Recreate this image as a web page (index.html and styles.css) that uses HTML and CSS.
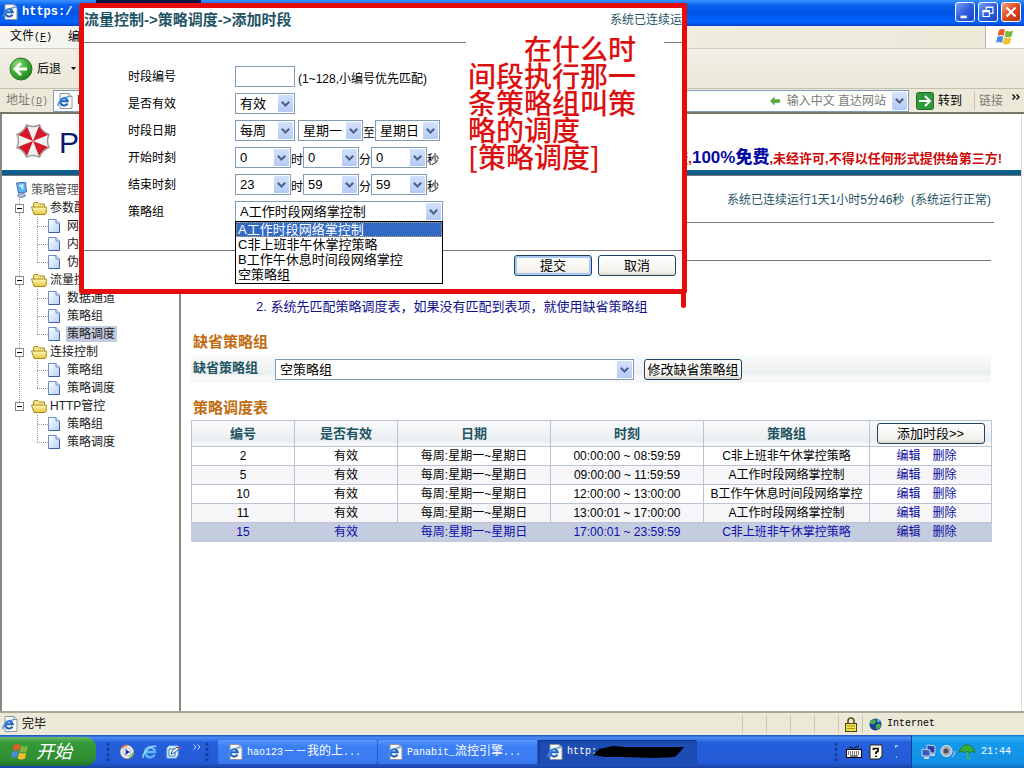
FILE: index.html
```html
<!DOCTYPE html>
<html lang="zh-CN">
<head>
<meta charset="utf-8">
<title>Panabit</title>
<link rel="stylesheet" href="styles.css">
</head>
<body>
<svg class="defs" aria-hidden="true">
  <defs>
    <linearGradient id="gFolder" x1="0" y1="0" x2="0" y2="1"><stop offset="0" stop-color="#fffbc0"/><stop offset="1" stop-color="#e8c33c"/></linearGradient>
    <linearGradient id="gFile" x1="0" y1="0" x2="1" y2="1"><stop offset="0" stop-color="#ffffff"/><stop offset="1" stop-color="#b4d0f6"/></linearGradient>
    <radialGradient id="gBack" cx=".35" cy=".3" r=".8"><stop offset="0" stop-color="#8fe07a"/><stop offset=".6" stop-color="#35a62c"/><stop offset="1" stop-color="#1b7a18"/></radialGradient>
    <symbol id="ie" viewBox="0 0 16 16">
      <path d="M3 .5h9l3 3v12H3z" fill="#fbfbf4" stroke="#8d96a8"/>
      <path d="M12 .5v3h3" fill="#d5dcea" stroke="#8d96a8"/>
      <path d="M10.4 10.5a3.7 3.7 0 1 1 .3-2.3H4" fill="none" stroke="#1c62c4" stroke-width="2"/>
      <path d="M1 13C0 10 7 3 12 4" fill="none" stroke="#3b8fe0" stroke-width="1.3"/>
    </symbol>
    <symbol id="flag" viewBox="0 0 20 20">
      <path d="M4 3c2-1.500 4-1.500 6 0L8.600 9c-2-1.500-4-1.500-6 0z" fill="#e8582c"/>
      <path d="M11 3.500c2 1.300 4 1.300 7 0L16.500 9.500c-2.500 1.300-5 1.300-7 0z" fill="#7db83a"/>
      <path d="M2.300 10c2-1.500 4-1.500 6 0L7 16c-2-1.500-4-1.500-6 0z" fill="#4a8ae0"/>
      <path d="M9.200 10.500c2.500 1.300 4.500 1.300 7 0L15 16.500c-2.500 1.300-5 1.300-7.300 0z" fill="#f4c02c"/>
    </symbol>
    <symbol id="folder" viewBox="0 0 16 13">
      <path d="M2.500 11V2l1-1.500h3.500L8.500 2h5v3" fill="#f7e58a" stroke="#a88a1c"/>
      <path d="M.5 5h12l2.800 0v6l-1.300 1.500H3z" fill="url(#gFolder)" stroke="#a88a1c"/>
    </symbol>
    <symbol id="file" viewBox="0 0 12 14">
      <path d="M.5 .5h7.500l3.500 3.500v9.500H.5z" fill="url(#gFile)" stroke="#6f8fc4"/>
      <path d="M8 .5V4h3.500" fill="#dce9fb" stroke="#6f8fc4"/>
      <path d="M1 13.500h10.500V5" fill="none" stroke="#41619c"/>
    </symbol>
  </defs>
</svg>

<div class="window">
  <header class="titlebar">
    <svg class="ico16" aria-hidden="true"><use href="#ie"/></svg>
    <span class="title-text">https:/</span>
    <span class="title-scribble"></span>
    <div class="win-buttons">
      <button class="win-btn" type="button" aria-label="最小化"><svg viewBox="0 0 20 20"><path d="M5 14h7v3H5z" fill="#fff"/></svg></button>
      <button class="win-btn" type="button" aria-label="还原"><svg viewBox="0 0 20 20"><path d="M8 8V4.500h7.500v7H12M4.500 8.500h7v6.500h-7z M8 5h7.500M4.500 9.500h7" fill="none" stroke="#fff" stroke-width="1.300"/></svg></button>
      <button class="win-btn close" type="button" aria-label="关闭"><svg viewBox="0 0 20 20"><path d="M5 5l10 10M15 5L5 15" stroke="#fff" stroke-width="2.300"/></svg></button>
    </div>
  </header>

  <nav class="menubar">
    <span>文件<span class="mono">(<u>F</u>)</span></span><span>编</span>
    <div class="brand"><svg class="ico20" aria-hidden="true"><use href="#flag"/></svg></div>
  </nav>

  <div class="toolbar">
    <button class="back" type="button">
      <svg class="ico24" viewBox="0 0 24 24" aria-hidden="true"><circle cx="12" cy="12" r="11" fill="url(#gBack)" stroke="#2d7a28"/><path d="M12 6l-6 6 6 6M6.500 12H18" fill="none" stroke="#fff" stroke-width="2.800"/></svg>
      后退
      <svg class="caret" viewBox="0 0 5 3" aria-hidden="true"><path d="M0 0h5L2.500 3z"/></svg>
    </button>
  </div>

  <div class="addressbar">
    <label class="addr-label" for="addr">地址<span class="mono">(<u>D</u>)</span></label>
    <div class="addr-box">
      <svg class="ico16" aria-hidden="true"><use href="#ie"/></svg>
      <input id="addr" class="addr-input" value="h">
      <svg class="mini-arrow" viewBox="0 0 12 10" aria-hidden="true"><path d="M0 5l5-5v3h6v4H5v3z" fill="#55a83c"/></svg>
      <span class="addr-hint">输入中文 直达网站</span>
      <button class="drop" type="button" aria-label="展开"></button>
    </div>
    <button class="go" type="button"><svg class="ico18" viewBox="0 0 18 18" aria-hidden="true"><rect x=".5" y=".5" width="17" height="17" rx="2" fill="#2f9a38" stroke="#1d6e28"/><path d="M3 9h10M9 4l5 5-5 5" fill="none" stroke="#fff" stroke-width="2"/></svg>转到</button>
    <span class="links">链接</span>
    <svg class="more" viewBox="0 0 8 6" aria-hidden="true"><path d="M.5 .5L3 3 .5 5.500M4.500 .5L7 3 4.500 5.500" fill="none" stroke="#000" stroke-width="1.300"/></svg>
  </div>

  <div class="page">
    <div class="page-head">
      <svg class="logo" viewBox="0 0 36 36" aria-hidden="true">
        <path d="M11.500 2Q18 5 24.500 2Q26.500 9 34 11.500Q31 18 34 24.500Q27 27 24.500 34Q18 31 11.500 34Q9 27 2 24.500Q5 18 2 11.500Q9 9 11.500 2z" fill="#f2f2f0" stroke="#9c9c98" stroke-width="1.500"/>
        <g fill="#d3182c"><path d="M18 18L12 3Q9 9 3 12z"/><path d="M18 18L24 3Q27 9 33 12z"/><path d="M18 18L33 24Q27 27 24 33z"/><path d="M18 18L12 33Q9 27 3 24z"/></g>
      </svg>
      <span class="logo-text">P</span>
      <p class="notice">版,<strong>100%免费</strong>,未经许可,不得以任何形式提供给第三方!</p>
    </div>

    <div class="page-body">
      <aside class="sidebar">
        <div class="tree-root"><svg class="ico-pc" viewBox="0 0 13 16" aria-hidden="true"><path d="M2 1l9-1 1 10-8 1z" fill="#5ab4f4" stroke="#4a6ca8"/><path d="M4 3l5-1v6z" fill="#c4ecff"/><path d="M5 11l4 0 2 3-5 2-3-2z" fill="#a9bbd8" stroke="#6d83ac"/></svg>策略管理</div>
        <ul class="tree">
          <li><div class="node"><i class="exp"></i><svg class="ico-folder"><use href="#folder"/></svg>参数配</div>
            <ul class="leaves"><li><svg class="ico-file"><use href="#file"/></svg><span>网</span></li><li><svg class="ico-file"><use href="#file"/></svg><span>内</span></li><li><svg class="ico-file"><use href="#file"/></svg><span>伪</span></li></ul></li>
          <li><div class="node"><i class="exp"></i><svg class="ico-folder"><use href="#folder"/></svg>流量控</div>
            <ul class="leaves"><li><svg class="ico-file"><use href="#file"/></svg><span>数据通道</span></li><li><svg class="ico-file"><use href="#file"/></svg><span>策略组</span></li><li><svg class="ico-file"><use href="#file"/></svg><span class="current">策略调度</span></li></ul></li>
          <li><div class="node"><i class="exp"></i><svg class="ico-folder"><use href="#folder"/></svg>连接控制</div>
            <ul class="leaves"><li><svg class="ico-file"><use href="#file"/></svg><span>策略组</span></li><li><svg class="ico-file"><use href="#file"/></svg><span>策略调度</span></li></ul></li>
          <li><div class="node"><i class="exp"></i><svg class="ico-folder"><use href="#folder"/></svg>HTTP管控</div>
            <ul class="leaves"><li><svg class="ico-file"><use href="#file"/></svg><span>策略组</span></li><li><svg class="ico-file"><use href="#file"/></svg><span>策略调度</span></li></ul></li>
        </ul>
      </aside>

      <main class="main">
        <p class="uptime">系统已连续运行1天1小时5分46秒&nbsp; (系统运行正常)</p>
        <hr class="rule">
        <hr class="rule second">
        <p class="tip">2. 系统先匹配策略调度表，如果没有匹配到表项，就使用缺省策略组</p>
        <h2 class="section">缺省策略组</h2>
        <div class="default-row">
          <label for="defgroup">缺省策略组</label>
          <select id="defgroup" class="sel wide"><option>空策略组</option></select>
          <button class="btn" type="button">修改缺省策略组</button>
        </div>
        <h2 class="section">策略调度表</h2>
        <table class="grid">
          <colgroup><col class="c1"><col class="c1"><col class="c2"><col class="c2"><col class="c3"><col class="c4"></colgroup>
          <thead><tr><th>编号</th><th>是否有效</th><th>日期</th><th>时刻</th><th>策略组</th><th><button class="btn add" type="button">添加时段&gt;&gt;</button></th></tr></thead>
          <tbody>
            <tr><td>2</td><td>有效</td><td>每周:星期一~星期日</td><td>00:00:00 ~ 08:59:59</td><td>C非上班非午休掌控策略</td><td><a href="#">编辑</a><a href="#">删除</a></td></tr>
            <tr><td>5</td><td>有效</td><td>每周:星期一~星期日</td><td>09:00:00 ~ 11:59:59</td><td>A工作时段网络掌控制</td><td><a href="#">编辑</a><a href="#">删除</a></td></tr>
            <tr><td>10</td><td>有效</td><td>每周:星期一~星期日</td><td>12:00:00 ~ 13:00:00</td><td>B工作午休息时间段网络掌控</td><td><a href="#">编辑</a><a href="#">删除</a></td></tr>
            <tr><td>11</td><td>有效</td><td>每周:星期一~星期日</td><td>13:00:01 ~ 17:00:00</td><td>A工作时段网络掌控制</td><td><a href="#">编辑</a><a href="#">删除</a></td></tr>
            <tr class="active"><td>15</td><td>有效</td><td>每周:星期一~星期日</td><td>17:00:01 ~ 23:59:59</td><td>C非上班非午休掌控策略</td><td><a href="#">编辑</a><a href="#">删除</a></td></tr>
          </tbody>
        </table>
      </main>
    </div>
  </div>

  <div class="statusbar">
    <svg class="ico16" aria-hidden="true"><use href="#ie"/></svg><span class="done">完毕</span>
    <i class="pane"></i><i class="pane"></i><i class="pane"></i><i class="pane"></i>
    <i class="pane"><svg class="ico-lock" viewBox="0 0 12 15" aria-hidden="true"><path d="M3 7V4a3 3 0 0 1 6 0v3" fill="none" stroke="#5a5210" stroke-width="1.600"/><rect x=".5" y="6.500" width="11" height="8" fill="#f0e04c" stroke="#4a4410"/><path d="M2 9h8M2 11.500h8" stroke="#a89a20"/></svg></i>
    <span class="pane zone"><svg class="ico-globe" viewBox="0 0 14 14" aria-hidden="true"><circle cx="7" cy="7" r="6.500" fill="#1c3f9c"/><path d="M2 3l4-2 2 3-3 3-4-1zM8 7l4-1 1 3-4 4-2-3z" fill="#3fae4c"/><path d="M8 1l4 2-2 2z" fill="#7cc4ec"/></svg><span class="mono">Internet</span></span>
  </div>

  <footer class="taskbar">
    <button class="start" type="button"><svg class="ico20" aria-hidden="true"><use href="#flag"/></svg>开始</button>
    <i class="grip"></i>
    <div class="quick">
      <svg class="ico16" viewBox="0 0 16 16" aria-hidden="true"><circle cx="8" cy="8" r="6.500" fill="#f4f6fc" stroke="#c4b48c"/><path d="M3 4a6.500 6.500 0 0 1 5-2.500" stroke="#f0782c" stroke-width="1.800" fill="none"/><path d="M14 9a6.500 6.500 0 0 1-4 5" stroke="#7cb83c" stroke-width="1.600" fill="none"/><circle cx="8" cy="8" r="4" fill="#fff" stroke="#9cacd8"/><path d="M6.500 5l4.500 3-4.500 3z" fill="#20309c"/></svg>
      <svg class="ico16" viewBox="0 0 16 16" aria-hidden="true"><path d="M12.500 10.500a5 5 0 1 1 .5-2.500H4" fill="none" stroke="#5cb8f8" stroke-width="2.600"/><path d="M1.500 14C-1 11 8 0 14.500 2.500" fill="none" stroke="#a8dcff" stroke-width="1.300"/></svg>
      <svg class="ico16" viewBox="0 0 16 16" aria-hidden="true"><path d="M2 4l2-2h9v9l-2 3H2z" fill="#dff0fc" stroke="#8cc8ec"/><path d="M4 5h6v7H4z" fill="#fff" stroke="#2c78b4"/><path d="M6 10l1-3 5-4 2 2-5 4z" fill="#eef6fc" stroke="#1c5c9c"/><path d="M13 3l2 2" stroke="#d84c3c" stroke-width="2"/></svg>
    </div>
    <svg class="chev" viewBox="0 0 8 6" aria-hidden="true"><path d="M.5 .5L3 3 .5 5.500M4.500 .5L7 3 4.500 5.500" fill="none" stroke="#c8dcff"/></svg>
    <i class="grip"></i>
    <button class="task" type="button"><svg class="ico16" aria-hidden="true"><use href="#ie"/></svg><span><span class="mono">hao123</span>－－我的上<span class="mono">...</span></span></button>
    <button class="task" type="button"><svg class="ico16" aria-hidden="true"><use href="#ie"/></svg><span><span class="mono">Panabit_</span>流控引擎<span class="mono">...</span></span></button>
    <button class="task pressed" type="button"><svg class="ico16" aria-hidden="true"><use href="#ie"/></svg><span class="mono">http:</span><svg class="blot" viewBox="0 0 92 12" aria-hidden="true"><path d="M6 3L20 0l12 1h59l-5 6-4 4-20 1-30-1-20 0-12-2z"/></svg></button>
    <div class="lang">
      <i class="grip"></i>
      <svg class="ico16" viewBox="0 0 16 16" aria-hidden="true"><path d="M3 4c2-3 3 2 5 0s3 0 5-2" fill="none" stroke="#000"/><rect x=".5" y="5.500" width="15" height="8" fill="#fff" stroke="#000"/><path d="M2 8h12M2 10h12" stroke="#000" stroke-dasharray="1 1"/><path d="M4 12h8" stroke="#000"/></svg>
      <svg class="ico16" viewBox="0 0 16 16" aria-hidden="true"><path d="M2 1h12v11l-3 3H2z" fill="#fffff0" stroke="#222"/><path d="M5.500 6V4.500h4.500V7L8 8.500V10M8 11.500v1.500" fill="none" stroke="#000" stroke-width="1.700"/></svg>
      <svg class="dots" viewBox="0 0 3 14" aria-hidden="true"><path d="M0 1h3M0 2h1M1 12h1" stroke="#fff"/></svg>
    </div>
    <div class="tray">
      <svg class="ico16" viewBox="0 0 16 16" aria-hidden="true"><path d="M6 1l8 1v7H6z" fill="#2a3f9c" stroke="#c8d4f0"/><path d="M1 5l8 1v6H1z" fill="#3c56bc" stroke="#c8d4f0"/><path d="M3 14h5M10 11h4" stroke="#c8d4f0" stroke-width="2"/></svg>
      <svg class="ico16" viewBox="0 0 16 16" aria-hidden="true"><circle cx="6.500" cy="7" r="5.500" fill="#a9adb6" stroke="#e8ecf4"/><circle cx="6" cy="7" r="2.500" fill="#4c505a"/><path d="M12 13c2-2 3-4 3-6" stroke="#d4dcf0" fill="none"/></svg>
      <svg class="ico16" viewBox="0 0 16 16" aria-hidden="true"><path d="M0 9C1 3 5 1 8 1s7 2 8 8c-2-2-4-2-5 0-2-2-4-2-6 0-1-2-3-2-5 0z" fill="#35ae3c" stroke="#1d7a2c"/><path d="M8 8v5a1.500 1.500 0 0 0 3 0" stroke="#3cb84c" stroke-width="1.500" fill="none"/></svg>
      <span class="mono clock">21:44</span>
    </div>
  </footer>

  <section class="callout">
    <i class="tail"></i>
    <div class="callout-clip">
      <div class="callout-head"><h1>流量控制-&gt;策略调度-&gt;添加时段</h1><span>系统已连续运</span></div>
      <form class="form">
        <div class="field"><label for="no">时段编号</label><input id="no" class="txt"><span class="note">(1~128,小编号优先匹配)</span></div>
        <div class="field"><label for="valid">是否有效</label><select id="valid" class="sel s60"><option>有效</option></select></div>
        <div class="field"><label for="cycle">时段日期</label><select id="cycle" class="sel s60 gap"><option>每周</option></select><select class="sel s65" aria-label="起始日"><option>星期一</option></select><span class="unit">至</span><select class="sel s65" aria-label="结束日"><option>星期日</option></select></div>
        <div class="field"><label for="sh">开始时刻</label><select id="sh" class="sel s56"><option>0</option></select><span class="unit">时</span><select class="sel s56" aria-label="开始分"><option>0</option></select><span class="unit">分</span><select class="sel s56" aria-label="开始秒"><option>0</option></select><span class="unit">秒</span></div>
        <div class="field"><label for="eh">结束时刻</label><select id="eh" class="sel s56"><option>23</option></select><span class="unit">时</span><select class="sel s56" aria-label="结束分"><option>59</option></select><span class="unit">分</span><select class="sel s56" aria-label="结束秒"><option>59</option></select><span class="unit">秒</span></div>
        <div class="field"><label for="grp">策略组</label>
          <div class="combo"><select id="grp" class="sel full"><option>A工作时段网络掌控制</option></select>
            <ul class="list" role="listbox" aria-label="策略组"><li class="on" role="option" aria-selected="true">A工作时段网络掌控制</li><li role="option">C非上班非午休掌控策略</li><li role="option">B工作午休息时间段网络掌控</li><li role="option">空策略组</li></ul></div></div>
        <div class="actions"><button class="btn act primary" type="button">提交</button><button class="btn act" type="button">取消</button></div>
      </form>
      <p class="annotation">在什么时间段执行那一条策略组叫策略的调度
[策略调度]</p>
    </div>
  </section>
</div>
</body>
</html>
```
FILE: styles.css
```css
* { box-sizing: border-box; }
body { margin: 0; font: 12px/18px "Liberation Sans", "Noto Sans CJK SC", sans-serif; color: #000; background: #fff; }
p, h1, h2, ul { margin: 0; padding: 0; }
ul { list-style: none; }
button, input, select { font: inherit; color: inherit; margin: 0; }
button { padding: 0; border: 0; background: none; white-space: nowrap; }
svg { flex: none; display: block; }
i { flex: none; }
.defs { position: absolute; width: 0; height: 0; }
.mono { font-family: "Liberation Mono", monospace; font-size: 10px; }
.ico16 { width: 16px; height: 16px; }
.ico18 { width: 18px; height: 18px; }
.ico20 { width: 22px; height: 20px; }
.ico24 { width: 24px; height: 24px; }

.window { position: relative; display: flex; flex-direction: column; min-height: 100vh; overflow: hidden; }

.titlebar { position: relative; display: flex; align-items: center; height: 26px; padding: 0 3px 2px 2px; gap: 4px; background: linear-gradient(#3a93ff 0, #0a62ee 20%, #0055e4 50%, #0064ff 85%, #003fc4 100%); color: #fff; }
.title-text { font: bold 12px/16px "Liberation Mono", monospace; }
.title-scribble { position: absolute; left: 96px; top: 0; width: 105px; height: 3px; background: #0b1440; }
.win-buttons { display: flex; gap: 3px; margin-left: auto; }
.win-btn { width: 20px; height: 20px; border: 1px solid #fff; border-radius: 3px; background: linear-gradient(135deg, #7aa2f4, #2c5fe0 50%, #1c46c4); }
.win-btn.close { background: linear-gradient(135deg, #f0a088, #dc4a24 50%, #b8300c); }

.menubar { display: flex; align-items: center; gap: 16px; height: 23px; padding-left: 10px; background: linear-gradient(90deg, #f6f5f0, #ece9d8); border-bottom: 1px solid #cfccbc; }
.brand { display: flex; align-items: center; justify-content: center; align-self: stretch; width: 39px; margin-left: auto; background: #fff; border-left: 1px solid #b8b4a2; }
.toolbar { display: flex; align-items: center; height: 40px; padding-left: 9px; background: linear-gradient(#f2f0e6, #ebe8d8); border-bottom: 1px solid #c4c0ae; }
.back { display: flex; align-items: center; gap: 4px; }
.caret { width: 5px; height: 3px; margin-left: 6px; }
.addressbar { display: flex; align-items: center; height: 25px; padding: 0 4px 0 6px; background: #ece9d8; border-bottom: 2px solid #77756b; }
.addr-label, .addr-hint, .links { color: #7d7b74; white-space: nowrap; }
.addr-box { display: flex; flex: 1; align-items: center; height: 22px; margin-left: 5px; padding: 0 1px 0 3px; border: 1px solid #7f9db9; background: #fff; }
.addr-input { flex: 1; min-width: 0; height: 18px; padding: 0 4px; border: 0; font-family: "Liberation Mono", monospace; }
.mini-arrow { width: 11px; height: 10px; margin-right: 6px; }
.drop { width: 15px; height: 18px; margin-left: 6px; border-radius: 2px; background: url("data:image/svg+xml,%3Csvg xmlns='http://www.w3.org/2000/svg' width='9' height='6'%3E%3Cpath d='M.8.8l3.700 3.700L8.200.8' fill='none' stroke='%234d6185' stroke-width='2'/%3E%3C/svg%3E") center no-repeat, linear-gradient(#d8e4fd, #b0c8f6); }
.go { display: flex; align-items: center; gap: 4px; width: 58px; margin-left: 7px; }
.links { padding-left: 4px; border-left: 1px solid #c9c5b2; }
.more { width: 8px; height: 6px; margin: 0 0 8px 9px; }

.page { display: flex; flex: 1; flex-direction: column; margin: 0 2px 0 0; border-left: 2px solid #8a887c; border-right: 1px solid #e0ddcc; }
.page-head { display: flex; align-items: flex-start; height: 61px; padding: 9px 19px 0 13px; border-bottom: 5px solid #0c5c8c; }
.logo { width: 36px; height: 36px; }
.logo-text { margin: 2px 0 0 8px; font-size: 30px; line-height: 36px; color: #0a1a6c; }
.notice { margin: 24px 0 0 auto; font-size: 13px; font-weight: bold; line-height: 22px; color: #cc0808; white-space: nowrap; }
.notice strong { font-size: 17px; color: #0808a4; }
.page-body { display: flex; flex: 1; border-top: 1px solid #777; }

.sidebar { flex: none; width: 179px; padding: 5px 0 0 12px; border-right: 2px solid #8a887c; color: #222; line-height: 18px; }
.tree-root { display: flex; align-items: center; gap: 3px; height: 18px; color: #555; }
.ico-pc { width: 14px; height: 16px; }
.tree li { background: repeating-linear-gradient(#999 0 1px, transparent 1px 2px) 5px 0 / 1px 100% no-repeat; }
.tree > li:last-child { background-size: 1px 9px; }
.node { display: flex; align-items: center; height: 18px; }
.exp { width: 9px; height: 9px; margin: 0 7px 0 1px; border: 1px solid #888; background: linear-gradient(#000, #000) center / 5px 1px no-repeat #fff; }
.ico-folder { width: 16px; height: 13px; margin-right: 3px; }
.leaves { margin-left: 18px; }
.leaves li { display: flex; align-items: center; height: 18px; padding-left: 5px; }
.leaves li:last-child { background-size: 1px 9px; }
.leaves li::before { content: ""; width: 11px; height: 1px; background: repeating-linear-gradient(90deg, #999 0 1px, transparent 1px 2px); }
.ico-file { width: 12px; height: 14px; margin-right: 6px; }
.leaves span { padding: 0 2px 0 1px; line-height: 16px; }
.leaves .current { background: #c3cbe0; }

.main { flex: 1; min-width: 0; padding: 15px 30px 0 10px; }
.uptime { text-align: right; color: #1f5464; }
.rule { height: 1px; margin: 13px -3px 0 0; border: 0; background: #777; }
.rule.second { margin: 37px 0 0; }
.tip { margin-top: 37px; padding-left: 65px; font-size: 13px; color: #10108c; }
.section { margin-top: 16px; padding-left: 2px; font-size: 15px; line-height: 20px; color: #bf6c10; }
.default-row { display: flex; align-items: center; height: 29px; margin-top: 2px; padding: 2px 0 0 2px; background: linear-gradient(#fafbfb, #eceff0 70%, #f7f7f7 75%); font-size: 13px; }
.default-row label { width: 82px; padding-bottom: 4px; font-weight: bold; color: #1f5464; }
.default-row + .section { margin-top: 15px; }
.wide { width: 45%; margin-right: 10px; }
.sel { height: 21px; padding: 0 18px 0 4px; border: 1px solid #7f9db9; border-radius: 0; outline: 0; appearance: none; font-size: 13px; line-height: 18px; background: url("data:image/svg+xml,%3Csvg xmlns='http://www.w3.org/2000/svg' width='9' height='6'%3E%3Cpath d='M.8.8l3.700 3.700L8.200.8' fill='none' stroke='%234d6185' stroke-width='2'/%3E%3C/svg%3E") right 4px center / 9px 6px no-repeat, linear-gradient(#d4e1fc, #b4caf7) right 1px center / 15px 17px no-repeat #fff; }
.btn { height: 21px; padding: 0 3px; border: 1px solid #1c4468; border-radius: 3px; background: linear-gradient(#fff, #f3f2ec 80%, #dcd8cc); font-size: 13px; line-height: 18px; font-weight: normal; color: #000; }
.default-row .btn { width: 98px; padding: 0; }

.grid { width: 100%; margin-top: 2px; table-layout: fixed; border-collapse: collapse; }
.c1 { width: 103px; }
.c2 { width: 153px; }
.c3 { width: 166px; }
.c4 { width: 122px; }
.grid th, .grid td { padding: 0; border: 1px solid #bcc3d4; text-align: center; white-space: nowrap; }
.grid th { height: 26px; font-size: 13px; line-height: 20px; color: #1f5464; background: linear-gradient(#fafbfb, #e9edef 80%, #f7f7f7 85%); }
.grid td { height: 19px; line-height: 18px; }
.grid td:last-child { padding-right: 8px; }
.grid tbody tr:nth-child(even) { background: #f6f6f8; }
.grid tbody .active { background: #c5cce0; color: #0c0cac; }
.grid .active td { border-color: #c5cce0; }
.grid a { margin: 0 6px; color: #0c0c9c; text-decoration: none; }
.add { display: block; width: 108px; margin: 0 auto; }

.statusbar { display: flex; align-items: center; height: 24px; padding-left: 2px; border-top: 2px solid #aaa798; background: #ece9d8; }
.done { flex: 1; margin-left: 4px; }
.pane { display: flex; align-items: center; width: 24px; height: 18px; padding-left: 6px; border-left: 1px solid #c9c5b2; }
.zone { width: 162px; gap: 5px; font-size: 12px; }
.ico-lock { width: 12px; height: 15px; }
.ico-globe { width: 13px; height: 13px; }

.taskbar { display: flex; align-items: center; height: 33px; background: linear-gradient(#1c50b8 0, #4a8cf4 8%, #2560dc 22%, #2459d4 85%, #1941a5); color: #fff; }
.start { display: flex; align-items: center; gap: 5px; width: 96px; height: 29px; margin-right: 10px; padding-left: 9px; border-radius: 0 10px 10px 0; background: linear-gradient(#6cb868, #359a38 20%, #2f8c32 80%, #236c28); font-size: 18px; font-style: italic; color: #fff; }
.grip { width: 4px; height: 20px; background: radial-gradient(circle, #143c9c 1px, transparent 2px) 0 0 / 4px 5px; }
.quick { display: flex; gap: 7px; margin: 0 12px 0 9px; }
.chev { width: 8px; height: 6px; margin: 0 4px 10px 0; }
.chev + .grip { margin-right: 9px; }
.task { display: flex; flex: 0 1 159px; align-items: center; gap: 4px; min-width: 0; height: 24px; margin-right: 1px; padding-left: 9px; border-radius: 2px; background: linear-gradient(#5a9aff, #3c80f4 25%, #3a78ec); overflow: hidden; }
.task.pressed { background: #1c4cb4; box-shadow: inset 1px 1px 2px #123684; }
.blot { width: 92px; height: 12px; margin-left: -8px; }
.lang { display: flex; align-items: center; gap: 6px; margin-left: auto; margin-right: 13px; }
.lang .grip { margin-right: 2px; }
.dots { width: 3px; height: 14px; margin-left: 5px; }
.tray { display: flex; align-items: center; align-self: stretch; gap: 3px; padding: 0 13px 0 9px; border-left: 1px solid #0f3f94; background: linear-gradient(#1470d0 0, #2cacf4 8%, #159aec 25%, #1290e4 85%, #0e6cc0); }
.clock { margin-left: 3px; }

.callout { position: absolute; left: 79px; top: 3px; width: 608px; border: 5px solid #e60c0c; border-radius: 3px; background: #fff; }
.callout-clip { position: relative; }
.tail { position: absolute; right: -4px; bottom: -19px; width: 5px; height: 16px; border-radius: 0 0 3px 3px; background: #e60c0c; }
.callout-head { display: flex; justify-content: space-between; height: 35px; padding-top: 3px; border-bottom: 1px solid #777; color: #1f5464; white-space: nowrap; }
.callout-head h1 { font-size: 15px; line-height: 18px; }
.form { padding: 23px 6px 0 44px; }
.field { display: flex; align-items: center; height: 21px; margin-bottom: 6px; }
.field label { width: 107px; }
.txt { width: 60px; height: 21px; border: 1px solid #7f9db9; }
.note { margin-left: 3px; padding-top: 4px; }
.unit { padding-top: 5px; }
.s56 { width: 56px; }
.s60 { width: 60px; }
.s65 { width: 65px; }
.gap { margin-right: 3px; }
.combo { position: relative; width: 208px; }
.full { display: block; width: 100%; }
.list { position: absolute; z-index: 2; top: 20px; left: 0; right: 0; border: 1px solid #000; background: #fff; font-size: 13px; line-height: 15px; }
.list li { height: 15px; padding-left: 2px; white-space: nowrap; }
.list li:last-child { height: 16px; }
.list .on { background: #316ac5; color: #fff; outline: 1px dotted #c8a868; outline-offset: -1px; }
.actions { display: flex; justify-content: flex-end; gap: 6px; margin: 28px -6px 0 -44px; padding: 4px 6px 13px 0; border-top: 1px solid #777; }
.act { width: 78px; }
.primary { box-shadow: inset 0 0 0 2px #a9c8f4; }
.annotation { position: absolute; left: 382px; top: 27px; width: 198px; padding: 0 20px 0 2px; background: #fff; color: #dc1010; font: 500 28px/27px "Noto Sans CJK SC", sans-serif; text-indent: 56px; white-space: pre-line; }
.annotation { text-indent: 2em; }
```
